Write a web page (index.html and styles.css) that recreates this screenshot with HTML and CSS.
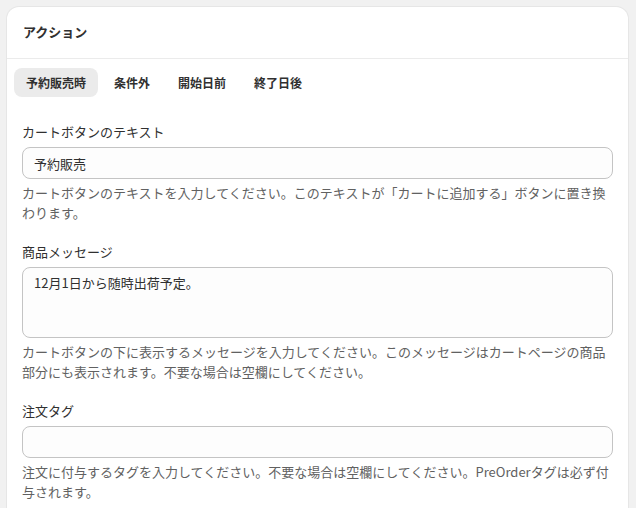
FILE: index.html
```html
<!DOCTYPE html>
<html lang="ja">
<head>
  <meta charset="UTF-8">
  <title>アクション</title>
  <link rel="stylesheet" href="styles.css">
</head>
<body>

  <div class="card">
    <div class="card-header">
      <h2>アクション</h2>
    </div>

    <div class="tabs">
      <button class="tab active">予約販売時</button>
      <button class="tab">条件外</button>
      <button class="tab">開始日前</button>
      <button class="tab">終了日後</button>
    </div>

    <div class="fields">
      <div class="field">
        <label for="cartText">カートボタンのテキスト</label>
        <input type="text" id="cartText" value="予約販売">
        <p class="help">カートボタンのテキストを入力してください。このテキストが「カートに追加する」ボタンに置き換わります。</p>
      </div>

      <div class="field">
        <label for="message">商品メッセージ</label>
        <textarea id="message">12月1日から随時出荷予定。</textarea>
        <p class="help">カートボタンの下に表示するメッセージを入力してください。このメッセージはカートページの商品部分にも表示されます。不要な場合は空欄にしてください。</p>
      </div>

      <div class="field">
        <label for="orderTag">注文タグ</label>
        <input type="text" id="orderTag" value="">
        <p class="help">注文に付与するタグを入力してください。不要な場合は空欄にしてください。PreOrderタグは必ず付与されます。</p>
      </div>
    </div>
  </div>

</body>
</html>
```

FILE: styles.css
```css
* {
  margin: 0;
  padding: 0;
  box-sizing: border-box;
  font-family: 'Noto Sans CJK JP', 'Noto Sans', sans-serif;
}

body {
  background: #f1f1f1;
  padding: 7px 8px 0 7px;
  color: #303030;
  font-size: 13px;
  line-height: 20px;
}

.card {
  background: #fff;
  border-radius: 12px;
  box-shadow: 0 0 0 1px #e6e6e6, 0 1px 0 rgba(0, 0, 0, 0.05);
  min-height: 520px;
}

.card-header {
  padding: 15px 16px 16px;
  border-bottom: 1px solid #ebebeb;
}

h2 {
  font-size: 13px;
  font-weight: 700;
  line-height: 20px;
}

.tabs {
  display: flex;
  gap: 4px;
  padding: 9px 7px 0;
}

.tab {
  border: none;
  background: transparent;
  color: #303030;
  font-size: 12px;
  font-weight: 700;
  line-height: 17px;
  padding: 6px 12px;
  border-radius: 8px;
  cursor: pointer;
}

.tab.active {
  background: #ebebeb;
}

.fields {
  display: flex;
  flex-direction: column;
  gap: 19px;
  padding: 25px 15px 0;
}

.field label {
  display: block;
  margin-bottom: 5px;
}

.field input,
.field textarea {
  display: block;
  width: 100%;
  border: 1px solid #c4c4c4;
  border-radius: 8px;
  background: #fdfdfd;
  color: #303030;
  font-size: 13px;
  line-height: 20px;
  padding: 5px 11px;
}

.field input {
  height: 32px;
}

.field textarea {
  height: 71px;
  resize: none;
}

.help {
  margin-top: 4px;
  color: #616161;
}
```
